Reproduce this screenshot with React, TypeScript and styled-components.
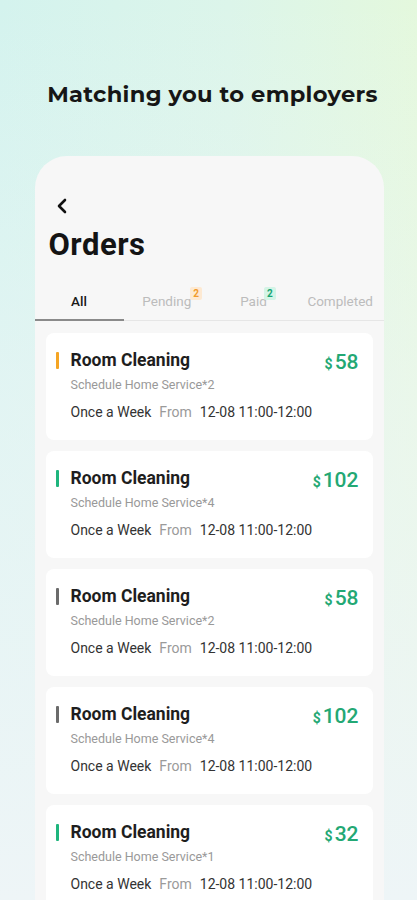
import styled, { createGlobalStyle } from 'styled-components';

type Order = {
  id: number;
  accent: string;
  count: number;
  price: number;
};

const orders: Order[] = [
  { id: 1, accent: '#f5a524', count: 2, price: 58 },
  { id: 2, accent: '#1eb57d', count: 4, price: 102 },
  { id: 3, accent: '#6b6b6b', count: 2, price: 58 },
  { id: 4, accent: '#6b6b6b', count: 4, price: 102 },
  { id: 5, accent: '#1eb57d', count: 1, price: 32 },
];

const GlobalStyle = createGlobalStyle`
  html, body {
    margin: 0;
    padding: 0;
    height: 900px;
    overflow: hidden;
  }
  body {
    font-family: Roboto, 'Liberation Sans', sans-serif;
  }
`;

const App = () => {
  return (
    <Page>
      <GlobalStyle />
      <Headline>Matching you to employers</Headline>
      <Phone>
        <BackButton aria-label="back">
          <svg width="12" height="16" viewBox="0 0 12 16" fill="none">
            <path d="M9 2L3 8L9 14" stroke="#111" strokeWidth="2.6" strokeLinecap="round" strokeLinejoin="round" />
          </svg>
        </BackButton>
        <Title>Orders</Title>
        <Tabs>
          <Tab $active>All</Tab>
          <Tab>
            Pending
            <Badge $tone="orange">2</Badge>
          </Tab>
          <Tab>
            Paid
            <Badge $tone="green">2</Badge>
          </Tab>
          <Tab>Completed</Tab>
        </Tabs>
        <List>
          {orders.map((o) => (
            <Card key={o.id}>
              <CardTop>
                <Accent $color={o.accent} />
                <CardTitle>Room Cleaning</CardTitle>
                <Price>
                  <Currency>$</Currency>
                  {o.price}
                </Price>
              </CardTop>
              <Sub>Schedule Home Service*{o.count}</Sub>
              <Meta>
                <MetaStrong>Once a Week</MetaStrong>
                <MetaMuted>From</MetaMuted>
                <MetaStrong>12-08 11:00-12:00</MetaStrong>
              </Meta>
            </Card>
          ))}
        </List>
      </Phone>
    </Page>
  );
};

const Page = styled.div`
  width: 417px;
  height: 900px;
  overflow: hidden;
  display: flex;
  flex-direction: column;
  align-items: center;
  background:
    linear-gradient(180deg, rgba(255, 255, 255, 0) 0%, rgba(240, 246, 248, 0.5) 45%, #eef5f7 100%),
    linear-gradient(90deg, #d4f3ee 0%, #dcf5ea 55%, #e4f8dd 100%);
`;

const Headline = styled.h1`
  margin: 80px 0 0 8px;
  font-family: Montserrat, 'Open Sans', 'Noto Sans', sans-serif;
  font-size: 22.6px;
  font-weight: 700;
  letter-spacing: 0.3px;
  color: #161616;
`;

const Phone = styled.div`
  margin-top: 48px;
  margin-left: 1px;
  width: 349px;
  flex: 1;
  background: #f7f7f7;
  border-radius: 32px 32px 0 0;
  display: flex;
  flex-direction: column;
`;

const BackButton = styled.div`
  margin: 42px 0 0 21px;
  height: 16px;
  display: flex;
  align-items: center;
`;

const Title = styled.h2`
  margin: 14px 0 0 14px;
  font-family: Roboto, 'Liberation Sans', sans-serif;
  font-size: 31px;
  font-weight: 700;
  letter-spacing: 0.5px;
  color: #141414;
  line-height: 34px;
`;

const Tabs = styled.div`
  margin-top: 20px;
  display: grid;
  grid-template-columns: 89px 1fr 1fr 1fr;
  border-bottom: 1px solid #e6e6e6;
`;

const Tab = styled.div<{ $active?: boolean }>`
  position: relative;
  display: flex;
  justify-content: center;
  align-items: center;
  height: 37px;
  font-size: 13.5px;
  color: ${({ $active }) => ($active ? '#1a1a1a' : '#bcbcbc')};
  font-weight: ${({ $active }) => ($active ? 500 : 400)};
  border-bottom: 2px solid ${({ $active }) => ($active ? '#8a8a8a' : 'transparent')};
  margin-bottom: -1px;
`;

const Badge = styled.span<{ $tone: 'orange' | 'green' }>`
  position: absolute;
  top: 5px;
  right: ${({ $tone }) => ($tone === 'orange' ? '8px' : '21px')};
  min-width: 12px;
  height: 13px;
  font-size: 10px;
  font-weight: 700;
  line-height: 13px;
  text-align: center;
  border-radius: 2px;
  color: ${({ $tone }) => ($tone === 'orange' ? '#f29b2b' : '#19a574')};
  background: ${({ $tone }) => ($tone === 'orange' ? '#fde9d2' : '#d4f4e6')};
`;

const List = styled.div`
  padding: 12px 11px 0;
  display: flex;
  flex-direction: column;
  gap: 11px;
`;

const Card = styled.div`
  background: #ffffff;
  border-radius: 8px;
  height: 107px;
  box-sizing: border-box;
  padding: 16px 14px 0 10px;
`;

const CardTop = styled.div`
  display: flex;
  align-items: center;
  height: 22px;
`;

const Accent = styled.span<{ $color: string }>`
  width: 3px;
  height: 17px;
  border-radius: 1px;
  background: ${({ $color }) => $color};
  margin-right: 12px;
`;

const CardTitle = styled.div`
  flex: 1;
  font-size: 17.5px;
  font-weight: 700;
  color: #1e1e1e;
`;

const Price = styled.div`
  font-size: 21px;
  font-weight: 500;
  color: #23a874;
  display: flex;
  align-items: baseline;
  margin-top: 4px;
`;

const Currency = styled.span`
  font-size: 14px;
  font-weight: 700;
  margin-right: 2px;
`;

const Sub = styled.div`
  margin: 6px 0 0 15px;
  font-size: 12.5px;
  color: #999999;
`;

const Meta = styled.div`
  margin: 12px 0 0 15px;
  display: flex;
  gap: 8px;
  font-size: 14px;
`;

const MetaStrong = styled.span`
  color: #333333;
`;

const MetaMuted = styled.span`
  color: #9a9a9a;
`;

export default App;
